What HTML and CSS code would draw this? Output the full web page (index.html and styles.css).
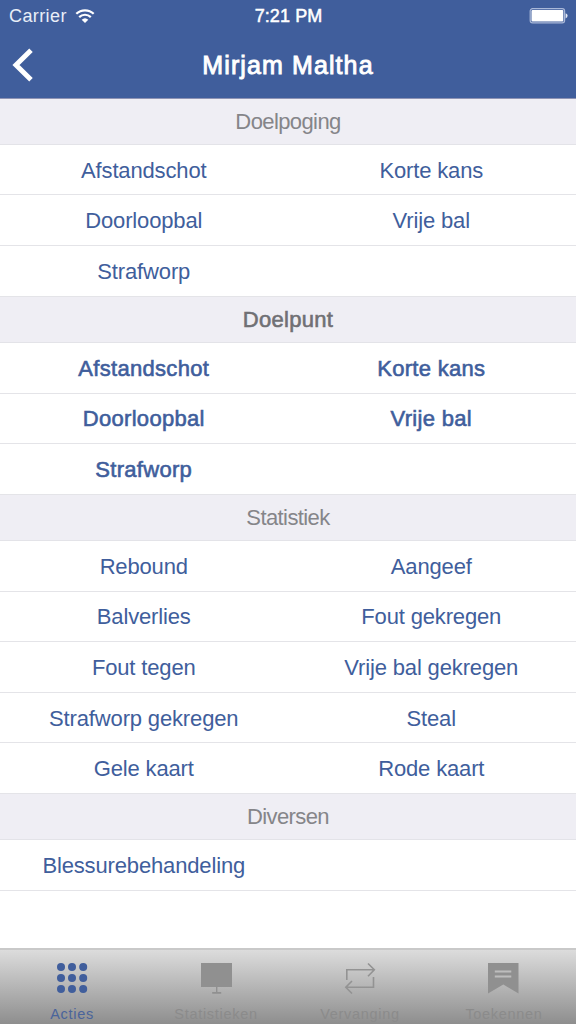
FILE: index.html
```html
<!DOCTYPE html>
<html lang="nl">
<head>
    <meta charset="UTF-8">
    <meta name="viewport" content="width=device-width, initial-scale=1.0">
    <title>Mirjam Maltha</title>
    <link rel="stylesheet" href="styles.css">
</head>
<body>
    <div class="app">
        <header class="top">
            <div class="status-bar">
                <div class="carrier">
                    <span>Carrier</span>
                    <svg width="20" height="15" viewBox="0 0 20 15">
                        <path d="M1.3 4.8a12.5 12.5 0 0 1 17.4 0M4.2 8.1a8.3 8.3 0 0 1 11.6 0" fill="none" stroke="#fff" stroke-width="2.2"/>
                        <path d="M6.7 10.700a4.8 4.8 0 0 1 6.6 0L10 14z" fill="#fff"/>
                    </svg>
                </div>
                <span class="time">7:21 PM</span>
                <div class="battery">
                    <svg width="39" height="16" viewBox="0 0 39 16">
                        <rect x="1.2" y="0.7" width="34.4" height="14.2" rx="2.4" fill="none" stroke="#a9b8d8" stroke-width="1.2"/>
                        <rect x="2.5" y="2" width="31.800" height="11.600" rx="1" fill="#fff"/>
                        <path d="M36.6 5.2q2 .7 2 2.6t-2 2.6z" fill="#e3e8f3"/>
                    </svg>
                </div>
            </div>
            <div class="nav-bar">
                <svg class="back" width="22" height="34" viewBox="0 0 22 34">
                    <path d="M19 2.300L4 17l15 14.700" fill="none" stroke="#fff" stroke-width="5"/>
                </svg>
                <h1>Mirjam Maltha</h1>
            </div>
        </header>

        <main class="content">
            <h2>Doelpoging</h2>
            <div class="row"><span>Afstandschot</span><span>Korte kans</span></div>
            <div class="row"><span>Doorloopbal</span><span>Vrije bal</span></div>
            <div class="row"><span>Strafworp</span></div>

            <h2 class="strong">Doelpunt</h2>
            <div class="row strong"><span>Afstandschot</span><span>Korte kans</span></div>
            <div class="row strong"><span>Doorloopbal</span><span>Vrije bal</span></div>
            <div class="row strong"><span>Strafworp</span></div>

            <h2>Statistiek</h2>
            <div class="row"><span>Rebound</span><span>Aangeef</span></div>
            <div class="row"><span>Balverlies</span><span>Fout gekregen</span></div>
            <div class="row"><span>Fout tegen</span><span>Vrije bal gekregen</span></div>
            <div class="row"><span>Strafworp gekregen</span><span>Steal</span></div>
            <div class="row"><span>Gele kaart</span><span>Rode kaart</span></div>

            <h2>Diversen</h2>
            <div class="row"><span>Blessurebehandeling</span></div>
        </main>

        <nav class="tab-bar">
            <div class="tab active">
                <svg width="32" height="32" viewBox="0 0 32 32" fill="#405e9c">
                    <circle cx="5" cy="5" r="4"/><circle cx="16" cy="5" r="4"/><circle cx="27.200" cy="5" r="4"/>
                    <circle cx="5" cy="16" r="4"/><circle cx="16" cy="16" r="4"/><circle cx="27.200" cy="16" r="4"/>
                    <circle cx="5" cy="27" r="4"/><circle cx="16" cy="27" r="4"/><circle cx="27.200" cy="27" r="4"/>
                </svg>
                <span>Acties</span>
            </div>
            <div class="tab">
                <svg width="32" height="32" viewBox="0 0 32 32" fill="#909090">
                    <path d="M1 1h31v24H1zM16 25h1.400v5h3.800v1.700h-9V30H16z"/>
                </svg>
                <span>Statistieken</span>
            </div>
            <div class="tab">
                <svg width="32" height="32" viewBox="0 0 32 32" fill="none" stroke="#939393" stroke-width="1.600">
                    <path d="M2.800 18V7.800h27.500M24 1.500l6.300 6.300L24 14.200M29.500 15v10.200H2M8 19l-6.200 6.200L8 31.500"/>
                </svg>
                <span>Vervanging</span>
            </div>
            <div class="tab">
                <svg width="32" height="32" viewBox="0 0 32 32">
                    <path d="M0 1h30.500v30.500L15.300 22.500 0 31.500z" fill="#909090"/>
                    <path d="M6.800 9.500h16.500M6.800 14.500h16.500" stroke="#bdbdbd" stroke-width="1.800"/>
                </svg>
                <span>Toekennen</span>
            </div>
        </nav>
    </div>
</body>
</html>
```
FILE: styles.css
```css
* {
    box-sizing: border-box;
}

body {
    margin: 0;
    font-family: "Liberation Sans", Arial, sans-serif;
    background-color: #fff;
}

.app {
    display: flex;
    flex-direction: column;
    height: 1024px;
    overflow: hidden;
}

.top {
    height: 98.600px;
    flex-shrink: 0;
    background-color: #405e9c;
    color: #fff;
    border-bottom: 1px solid #8e93b4;
}

.status-bar {
    display: grid;
    grid-template-columns: 1fr auto 1fr;
    align-items: center;
    height: 32px;
    padding: 0 8px 0 9px;
    font-size: 18px;
}

.carrier {
    display: flex;
    align-items: center;
    gap: 8px;
    color: #e9eef8;
    letter-spacing: 0.400px;
}

.time {
    letter-spacing: 0.100px;
    -webkit-text-stroke: 0.500px #fff;
}

.battery {
    display: flex;
    justify-content: flex-end;
}

.nav-bar {
    display: grid;
    grid-template-columns: 60px 1fr 60px;
    align-items: center;
    height: 66px;
}

.back {
    margin-left: 12px;
}

.nav-bar h1 {
    margin: 0;
    text-align: center;
    font-size: 25px;
    font-weight: normal;
    letter-spacing: 1.100px;
    -webkit-text-stroke: 0.900px #fff;
}

.content {
    flex: 1;
}

.content h2 {
    display: flex;
    align-items: center;
    justify-content: center;
    height: 46.300px;
    margin: 0;
    padding-top: 1px;
    background-color: #efeef4;
    border-bottom: 1px solid #e3e3e8;
    color: #858589;
    font-size: 22px;
    font-weight: normal;
    letter-spacing: -0.600px;
}

.content h2.strong {
    color: #707074;
    letter-spacing: 0.300px;
    -webkit-text-stroke: 0.600px #707074;
}

.row {
    display: grid;
    grid-template-columns: 1fr 1fr;
    align-items: center;
    height: 50.600px;
    border-bottom: 1px solid #e4e4e8;
    padding: 2px 1px 0 0;
    color: #405e9c;
    font-size: 22px;
    letter-spacing: -0.150px;
    text-align: center;
}

.row span {
    white-space: nowrap;
}

.row.strong {
    letter-spacing: 0.300px;
    -webkit-text-stroke: 0.600px #405e9c;
}

.tab-bar {
    display: flex;
    height: 76px;
    flex-shrink: 0;
    border-top: 2px solid #c9c9c9;
    background: linear-gradient(#dcdcdc, #8e8e8e);
}

.tab {
    flex: 1;
    display: flex;
    flex-direction: column;
    align-items: center;
    padding-top: 12px;
    color: #8b8b8b;
    font-size: 14.500px;
    letter-spacing: 0.700px;
}

.tab span {
    margin-top: 12px;
    line-height: 17px;
}

.tab.active {
    color: #4a649b;
}
```
